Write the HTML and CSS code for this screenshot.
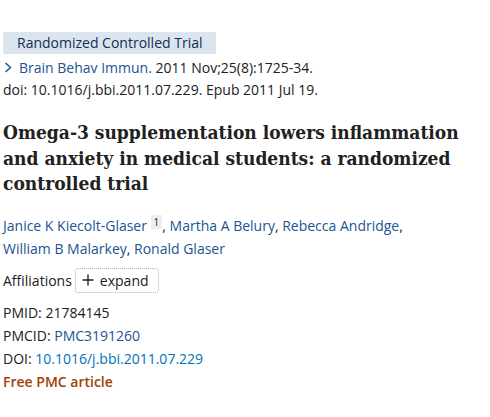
FILE: index.html
```html
<!DOCTYPE html>
<html>
<head>
<meta charset="utf-8">
<link rel="stylesheet" href="styles.css">
</head>
<body>
<main class="article">
  <div class="badges"><span class="badge">Randomized Controlled Trial</span></div>
  <div class="citation">
    <div class="journal-line"><span class="chev"><svg width="8" height="11" viewBox="0 0 8 11"><path d="M1.5 1 L6.5 5.5 L1.5 10" fill="none" stroke="#205493" stroke-width="1.5"/></svg></span><a class="link">Brain Behav Immun.</a> 2011 Nov;25(8):1725-34.</div>
    <div>doi: 10.1016/j.bbi.2011.07.229. Epub 2011 Jul 19.</div>
  </div>
  <h1 class="title">Omega-3 supplementation lowers inflammation and anxiety in medical students: a randomized controlled trial</h1>
  <div class="authors"><a class="link">Janice K Kiecolt-Glaser</a> <sup class="aff">1</sup>, <a class="link">Martha A Belury</a>, <a class="link">Rebecca Andridge</a>, <a class="link">William B Malarkey</a>, <a class="link">Ronald Glaser</a></div>
  <div class="affiliations">Affiliations <span class="expand"><svg class="plus" width="12" height="12" viewBox="0 0 12 12"><path d="M6 0.5 V11.5 M0.5 6 H11.5" stroke="#212121" stroke-width="1.4" fill="none"/></svg>expand</span></div>
  <ul class="ids">
    <li>PMID: 21784145</li>
    <li>PMCID: <a class="link">PMC3191260</a></li>
    <li>DOI: <a class="link doi">10.1016/j.bbi.2011.07.229</a></li>
  </ul>
  <div class="free">Free PMC article</div>
</main>
</body>
</html>
```
FILE: styles.css
```css
body {
  margin: 0;
  background: #fff;
  font-family: "Open Sans", "Noto Sans", sans-serif;
  font-size: 14px;
  color: #212121;
}
.article {
  padding: 32px 3px 0 3px;
}
.badges {
  display: flex;
}
.badge {
  background: #dce4ef;
  color: #112e51;
  padding: 0 13px 0 14px;
  line-height: 22px;
}
.citation {
  margin-top: 3px;
  line-height: 22px;
}
.chev {
  display: inline-block;
  width: 15px;
  padding-left: 1px;
}
.link {
  color: #205493;
  text-decoration: none;
}
.title {
  font-family: "DejaVu Serif Condensed", "DejaVu Serif", serif;
  font-stretch: condensed;
  font-weight: bold;
  font-size: 19px;
  line-height: 25.5px;
  color: #212121;
  margin: 19px 0 0 0;
}
.authors {
  margin-top: 14px;
  line-height: 23px;
  padding-right: 80px;
}
.aff {
  font-size: 10px;
  background: #eeeeee;
  padding: 0 3px;
  vertical-align: 5px;
}
.affiliations {
  margin-top: 8px;
  display: flex;
  align-items: center;
  gap: 3px;
}
.expand {
  display: inline-flex;
  align-items: center;
  gap: 6px;
  border: 1px dotted #aeb0b5;
  border-radius: 3px;
  padding: 0 9px 0 6px;
  height: 23px;
}
.ids {
  list-style: none;
  margin: 8px 0 0;
  padding: 0;
  line-height: 23px;
}
.doi { color: #0071bc; }
.free {
  color: #a0400a;
  font-weight: 600;
  line-height: 23px;
}
```
